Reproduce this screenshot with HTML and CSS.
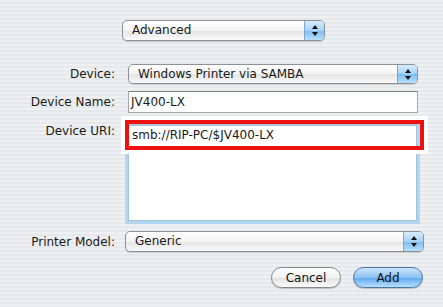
FILE: index.html
```html
<!DOCTYPE html>
<html lang="en">
<head>
    <meta charset="UTF-8">
    <title>Add Printer</title>
    <link rel="stylesheet" href="styles.css">
</head>
<body>
    <div class="sheet">
        <div class="topRow">
            <div class="popup popupAdvanced">
                <span class="popupText">Advanced</span>
                <span class="popupArrows"><i class="up"></i><i class="down"></i></span>
            </div>
        </div>

        <div class="form">
            <div class="row rowDevice">
                <label class="label">Device:</label>
                <div class="popup popupDevice">
                    <span class="popupText">Windows Printer via SAMBA</span>
                    <span class="popupArrows"><i class="up"></i><i class="down"></i></span>
                </div>
            </div>

            <div class="row rowName">
                <label class="label">Device Name:</label>
                <div class="field fieldName">JV400-LX</div>
            </div>

            <div class="row rowUri">
                <label class="label">Device URI:</label>
                <div class="uriBox">
                    <div class="uriLine">smb://RIP-PC/$JV400-LX</div>
                    <div class="highlight"></div>
                </div>
            </div>

            <div class="row rowModel">
                <label class="label">Printer Model:</label>
                <div class="popup popupModel">
                    <span class="popupText">Generic</span>
                    <span class="popupArrows"><i class="up"></i><i class="down"></i></span>
                </div>
            </div>

            <div class="buttons">
                <button class="btn btnCancel">Cancel</button>
                <button class="btn btnAdd">Add</button>
            </div>
        </div>
    </div>
</body>
</html>
```

FILE: styles.css
```css
* {
    margin: 0;
    padding: 0;
    box-sizing: border-box;
}

body {
    font-family: 'DejaVu Sans', sans-serif;
    font-size: 12px;
    color: #1a1a1a;
    width: 443px;
    height: 307px;
    overflow: hidden;
    background: repeating-linear-gradient(to bottom, #eef0f1 0, #eef0f1 2px, #e6e9eb 2px, #e6e9eb 4px);
}

.sheet {
    padding-top: 20px;
}

.topRow {
    padding-left: 122px;
}

/* popup menus */
.popup {
    display: flex;
    align-items: stretch;
    height: 21px;
    border: 1px solid #8e9296;
    border-radius: 5px;
    background: linear-gradient(to bottom, #ffffff 0%, #f4f4f4 50%, #e4e4e4 51%, #fafafa 100%);
    box-shadow: 0 1px 1px rgba(0, 0, 0, 0.15);
    overflow: hidden;
}

.popupText {
    flex: 1;
    padding-left: 9px;
    line-height: 19px;
}

.popupArrows {
    width: 20px;
    display: flex;
    flex-direction: column;
    align-items: center;
    justify-content: center;
    gap: 3px;
    border-left: 1px solid #7da7d0;
    background: linear-gradient(to bottom, #d8ecfd 0%, #a9d2f7 50%, #7bbcf3 51%, #b8e0fc 100%);
}

.popupArrows i {
    display: block;
    width: 0;
    height: 0;
    border-left: 3px solid transparent;
    border-right: 3px solid transparent;
}

.popupArrows .up {
    border-bottom: 4px solid #111;
}

.popupArrows .down {
    border-top: 4px solid #111;
}

.popupAdvanced {
    width: 203px;
}

/* form rows */
.form {
    display: flex;
    flex-direction: column;
}

.row {
    display: flex;
    align-items: center;
}

.label {
    width: 116px;
    text-align: right;
    padding-right: 1px;
    flex-shrink: 0;
}

.rowDevice {
    margin-top: 23px;
}

.popupDevice {
    margin-left: 12px;
    width: 290px;
    height: 20px;
}

.popupDevice .popupText {
    line-height: 18px;
}

.rowName {
    margin-top: 7px;
}

.field {
    background: #fff;
    border: 1px solid #a5a9ad;
    border-top-color: #7e8286;
}

.fieldName {
    margin-left: 12px;
    width: 290px;
    height: 22px;
    padding-left: 2px;
    line-height: 20px;
}

.rowUri {
    margin-top: 8px;
    align-items: flex-start;
}

.rowUri .label {
    padding-top: 3px;
}

.uriBox {
    position: relative;
    margin-left: 9px;
    width: 295px;
    height: 103px;
    background: #fff;
    border: 3px solid #b3d5ee;
    box-shadow: inset 0 0 0 1px #9ec4e2;
}

.uriLine {
    margin: 0 1px;
    padding: 0 0 0 3px;
    border-top: 2px solid #a9c6dc;
    line-height: 18px;
}

/* red annotation laid over the URI field */
.highlight {
    position: absolute;
    left: -7px;
    top: -8px;
    width: 307px;
    height: 38px;
    border: 4px solid #fff;
    box-shadow: inset 0 0 0 4px #ee1111;
    pointer-events: none;
}

.rowModel {
    margin-top: 7px;
}

.popupModel {
    margin-left: 9px;
    width: 299px;
}

/* buttons */
.buttons {
    display: flex;
    justify-content: flex-end;
    gap: 12px;
    margin-top: 15px;
    padding-right: 20px;
}

.btn {
    font-family: 'DejaVu Sans', sans-serif;
    font-size: 12px;
    color: #111;
    width: 70px;
    height: 21px;
    border-radius: 11px;
    border: 1px solid #83878b;
    box-shadow: 0 1px 1px rgba(0, 0, 0, 0.2);
}

.btnCancel {
    background: linear-gradient(to bottom, #ffffff 0%, #f1f1f1 50%, #e2e2e2 51%, #fbfbfb 100%);
}

.btnAdd {
    border-color: #4a74a8;
    background: linear-gradient(to bottom, #cfe6fb 0%, #8cc2f2 50%, #5ea6ec 51%, #b6e0fc 100%);
}
```
